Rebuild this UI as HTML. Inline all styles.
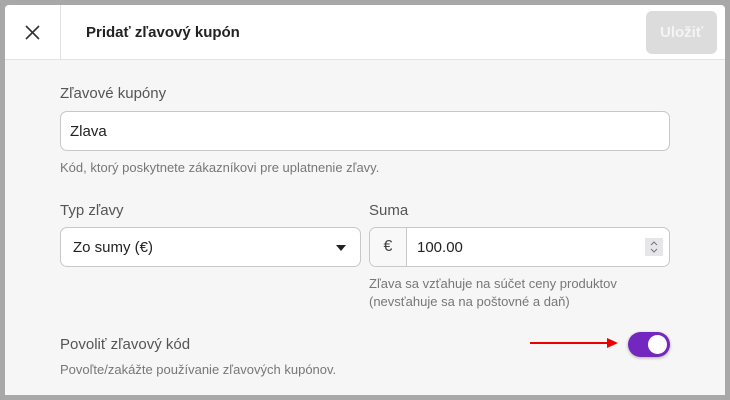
<!DOCTYPE html>
<html><head><meta charset="utf-8"><style>
*{box-sizing:border-box;margin:0;padding:0}
body{width:730px;height:400px;background:#a8a8a8;font-family:"Liberation Sans",sans-serif;position:relative;overflow:hidden}
.panel{position:absolute;left:5px;top:5px;width:720px;height:390px;background:#f6f6f6;border-radius:4px 4px 0 0;overflow:hidden}
.hdr{position:absolute;left:0;top:0;width:720px;height:55px;background:#fff;border-bottom:1px solid #e2e2e2}
.vd{position:absolute;left:55px;top:0;width:1px;height:55px;background:#e2e2e2}
.t{position:absolute;color:#222}
.lbl{position:absolute;font-size:15px;color:#555}
.hint{position:absolute;font-size:13px;color:#777;line-height:18px}
.inp{position:absolute;background:#fff;border:1px solid #c8c8c8;border-radius:7px}
</style></head><body>
<div class="panel">
<div class="hdr">
<svg style="position:absolute;left:20px;top:20px" width="15" height="15" viewBox="0 0 15 15"><path d="M1 1L14 14M14 1L1 14" stroke="#333" stroke-width="1.6"/></svg>
<div class="vd"></div>
<div class="t" style="left:81px;top:19px;font-size:15px;font-weight:bold;color:#222">Pridať zľavový kupón</div>
<div style="position:absolute;left:641px;top:6px;width:71px;height:43px;background:#dcdcdc;border-radius:6px;color:#f4f4f4;font-size:15px;font-weight:bold;text-align:center;line-height:43px">Uložiť</div>
</div>
<div class="lbl" style="left:55px;top:80px">Zľavové kupóny</div>
<div class="inp" style="left:55px;top:106px;width:610px;height:40px"><span style="position:absolute;left:9px;top:11px;font-size:15px;color:#222">Zlava</span></div>
<div class="hint" style="left:55px;top:154px">Kód, ktorý poskytnete zákazníkovi pre uplatnenie zľavy.</div>
<div class="lbl" style="left:55px;top:197px">Typ zľavy</div>
<div class="inp" style="left:55px;top:222px;width:301px;height:40px"><span style="position:absolute;left:12px;top:11px;font-size:15px;color:#222">Zo sumy (€)</span>
<svg style="position:absolute;left:275px;top:17px" width="10" height="6"><path d="M0 0H10L5 6Z" fill="#222"/></svg></div>
<div class="lbl" style="left:364px;top:197px">Suma</div>
<div class="inp" style="left:364px;top:222px;width:301px;height:40px">
<div style="position:absolute;left:0;top:0;width:37px;height:38px;border-right:1px solid #c8c8c8;border-radius:7px 0 0 7px;background:#f8f8f8;text-align:center;line-height:38px;font-size:16px;color:#444">€</div>
<span style="position:absolute;left:47px;top:11px;font-size:15px;color:#222">100.00</span>
<svg style="position:absolute;left:275px;top:10px" width="18" height="18"><rect width="18" height="18" fill="#e6e6ea"/><path d="M6 7L9 4L12 7M6 11L9 14L12 11" stroke="#777" fill="none" stroke-width="1"/></svg></div>
<div class="hint" style="left:364px;top:270px">Zľava sa vzťahuje na súčet ceny produktov<br>(nevsťahuje sa na poštovné a daň)</div>
<div class="lbl" style="left:55px;top:331px">Povoliť zľavový kód</div>
<div class="hint" style="left:55px;top:356px">Povoľte/zakážte používanie zľavových kupónov.</div>
<svg style="position:absolute;left:525px;top:332px" width="90" height="12"><path d="M0 6H85" stroke="#e00" stroke-width="2"/><path d="M77 1L88 6L77 11Z" fill="#e00"/></svg>
<div style="position:absolute;left:623px;top:327px;width:42px;height:25px;border-radius:13px;background:#7327bf;box-shadow:0 1px 3px rgba(0,0,0,.3)"><div style="position:absolute;left:20px;top:3px;width:19px;height:19px;border-radius:50%;background:#fff"></div></div>
</div>
</body></html>
